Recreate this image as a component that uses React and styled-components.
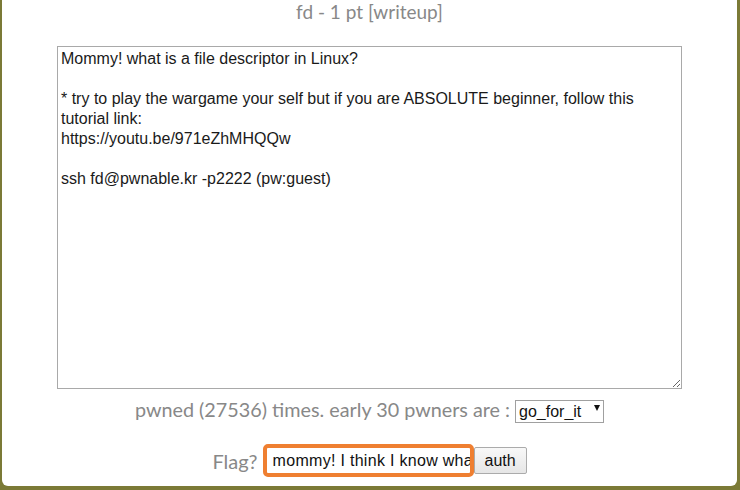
import React from "react";
import styled, { createGlobalStyle } from "styled-components";

const GlobalStyle = createGlobalStyle`
    html, body {
        margin: 0;
        padding: 0;
        background: #7b7a36;
    }
`;

const Panel = styled.div`
    margin: 0 3px 0 2px;
    height: 486px;
    background: #ffffff;
    border-radius: 0 0 6px 6px;
    display: flex;
    flex-direction: column;
    align-items: center;
    font-family: Lato, "Open Sans", sans-serif;
    color: #888888;
`;

const Title = styled.div`
    font-size: 19px;
    line-height: 24px;
    margin-bottom: 22px;
`;

const Description = styled.textarea`
    box-sizing: border-box;
    width: 625px;
    height: 343px;
    margin: 0;
    padding: 2px 3px;
    border: 1px solid #a9a9a9;
    font-family: "Liberation Sans", Arial, sans-serif;
    font-size: 16px;
    line-height: 20px;
    color: #1a1a1a;
    resize: both;
    outline: none;
`;

const InfoRow = styled.div`
    margin-top: 8px;
    display: flex;
    align-items: center;
    font-size: 19.8px;
    height: 23px;
`;

const SelectWrap = styled.span`
    position: relative;
    margin-left: 5px;
    display: inline-block;
    height: 23px;
`;

const Select = styled.select`
    appearance: none;
    box-sizing: border-box;
    width: 89px;
    height: 23px;
    margin: 0;
    padding: 0 0 0 3px;
    border: 1px solid #a0a0a0;
    border-radius: 0;
    background: #ffffff;
    font-family: "Liberation Sans", Arial, sans-serif;
    font-size: 16px;
    color: #111111;
`;

// small down triangle drawn over the select
const Arrow = styled.span`
    position: absolute;
    right: 4px;
    top: 8px;
    width: 0;
    height: 0;
    border-left: 3.5px solid transparent;
    border-right: 3.5px solid transparent;
    border-top: 6px solid #111111;
    pointer-events: none;
`;

const FlagRow = styled.form`
    margin: 24px 0 0;
    display: flex;
    align-items: center;
    font-size: 20px;
`;

const FlagLabel = styled.label`
    margin-right: 5px;
`;

const FlagInput = styled.input`
    box-sizing: border-box;
    width: 211px;
    height: 33px;
    margin: 0;
    padding: 0 0 0 6px;
    border: 4px solid #ef7f31;
    border-radius: 5px;
    font-family: "Liberation Sans", Arial, sans-serif;
    font-size: 16px;
    letter-spacing: 0.3px;
    color: #111111;
    outline: none;
`;

const AuthButton = styled.button`
    box-sizing: border-box;
    width: 53px;
    height: 27px;
    margin: 0;
    padding: 0;
    border: 1px solid #ababab;
    border-radius: 2px;
    background: linear-gradient(#f8f8f8, #e6e6e6);
    font-family: "Liberation Sans", Arial, sans-serif;
    font-size: 16px;
    color: #111111;
`;

const description = `Mommy! what is a file descriptor in Linux?

* try to play the wargame your self but if you are ABSOLUTE beginner, follow this tutorial link:
https://youtu.be/971eZhMHQQw

ssh fd@pwnable.kr -p2222 (pw:guest)`;

const App = () => {
    return (
        <>
            <GlobalStyle />
            <Panel>
                <Title>fd - 1 pt [writeup]</Title>
                <Description readOnly value={description} />
                <InfoRow>
                    pwned (27536) times. early 30 pwners are :
                    <SelectWrap>
                        <Select defaultValue="go_for_it">
                            <option value="go_for_it">go_for_it</option>
                        </Select>
                        <Arrow />
                    </SelectWrap>
                </InfoRow>
                <FlagRow onSubmit={(e) => e.preventDefault()}>
                    <FlagLabel htmlFor="flag">Flag?</FlagLabel>
                    <FlagInput id="flag" defaultValue="mommy! I think I know what a file descriptor is!!" />
                    <AuthButton type="submit">auth</AuthButton>
                </FlagRow>
            </Panel>
        </>
    );
};

export default App;
